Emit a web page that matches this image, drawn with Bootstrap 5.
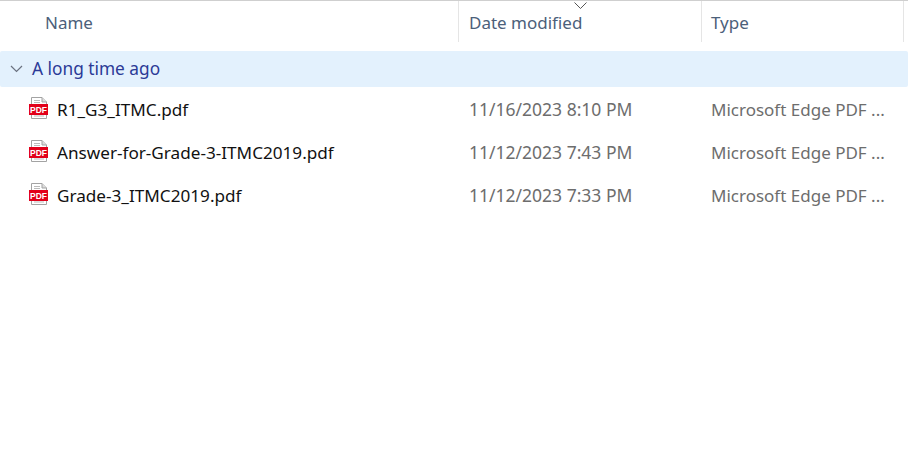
<!DOCTYPE html>
<html lang="en">
<head>
<meta charset="UTF-8">
<title>Downloads</title>
<link href="https://cdn.jsdelivr.net/npm/bootstrap@5.3.0/dist/css/bootstrap.min.css" rel="stylesheet">
<style>
body { background: #fff; font-family: "Noto Sans", "Open Sans", sans-serif; font-size: 17px; overflow: hidden; }
.top-line { height: 1px; background: #cfcfcf; }
.head-row { height: 41px; color: #4c607a; }
.col-name { width: 458px; padding-left: 45px; }
.col-date { width: 243px; padding-left: 10px; }
.col-type { width: 203px; padding-left: 9px; }
.head-row > div { height: 41px; line-height: 43px; position: relative; }
.head-row .col-date, .head-row .col-type { border-left: 1px solid #e5e5e5; }
.head-row .col-type { border-right: 1px solid #e5e5e5; }
.sort-mark { position: absolute; left: 115px; top: 1px; width: 13px; height: 7px; }
.group-row { margin-top: 9px; height: 36px; background: #e3f1fd; border-radius: 2px; color: #2b3a97; padding-left: 10px; gap: 9px; font-size: 17.3px; }
.file-list { margin-top: 1px; }
.file-row { height: 43px; }
.file-row .col-name { padding-left: 28px; color: #111; gap: 8px; font-size: 17.15px; }
.file-row .col-name svg { margin-top: -3px; }
.file-row .col-date { color: #6d6d6d; padding-left: 11px; font-size: 17.5px; }
.file-row .col-type { color: #6d6d6d; padding-left: 10px; white-space: nowrap; }
</style>
</head>
<body>

<div class="top-line"></div>

<div class="head-row d-flex">
    <div class="col-name">Name</div>
    <div class="col-date">Date modified
        <svg class="sort-mark" viewBox="0 0 13 7"><path d="M.5.5 6.500 6.500 12.500.5" fill="none" stroke="#555" stroke-width="1"/></svg>
    </div>
    <div class="col-type">Type</div>
</div>

<div class="group-row d-flex align-items-center">
    <svg width="13" height="8" viewBox="0 0 13 8"><path d="M1 1 6.500 6.500 12 1" fill="none" stroke="#6b7280" stroke-width="1.200"/></svg>
    <span>A long time ago</span>
</div>

<div class="file-list">
    <div class="file-row d-flex align-items-center">
        <div class="col-name d-flex align-items-center">
            <svg width="21" height="22" viewBox="0 0 21 22"><path d="M3.500.5H14L18.500 5V21.500H3.500Z" fill="#fff" stroke="#a3a3a3"/><path d="M14 .5V5H18.500" fill="#ddd" stroke="#a3a3a3"/><path d="M6 3.500H12M6 5.500H12M6 19H16" stroke="#bbb"/><rect x="1" y="7" width="19" height="11" fill="#e2001a"/><text x="10.500" y="15.500" font-size="8.500" font-weight="700" fill="#fff" text-anchor="middle" font-family="Liberation Sans, sans-serif">PDF</text></svg>
            <span>R1_G3_ITMC.pdf</span>
        </div>
        <div class="col-date">11/16/2023 8:10 PM</div>
        <div class="col-type">Microsoft Edge PDF ...</div>
    </div>
    <div class="file-row d-flex align-items-center">
        <div class="col-name d-flex align-items-center">
            <svg width="21" height="22" viewBox="0 0 21 22"><path d="M3.500.5H14L18.500 5V21.500H3.500Z" fill="#fff" stroke="#a3a3a3"/><path d="M14 .5V5H18.500" fill="#ddd" stroke="#a3a3a3"/><path d="M6 3.500H12M6 5.500H12M6 19H16" stroke="#bbb"/><rect x="1" y="7" width="19" height="11" fill="#e2001a"/><text x="10.500" y="15.500" font-size="8.500" font-weight="700" fill="#fff" text-anchor="middle" font-family="Liberation Sans, sans-serif">PDF</text></svg>
            <span>Answer-for-Grade-3-ITMC2019.pdf</span>
        </div>
        <div class="col-date">11/12/2023 7:43 PM</div>
        <div class="col-type">Microsoft Edge PDF ...</div>
    </div>
    <div class="file-row d-flex align-items-center">
        <div class="col-name d-flex align-items-center">
            <svg width="21" height="22" viewBox="0 0 21 22"><path d="M3.500.5H14L18.500 5V21.500H3.500Z" fill="#fff" stroke="#a3a3a3"/><path d="M14 .5V5H18.500" fill="#ddd" stroke="#a3a3a3"/><path d="M6 3.500H12M6 5.500H12M6 19H16" stroke="#bbb"/><rect x="1" y="7" width="19" height="11" fill="#e2001a"/><text x="10.500" y="15.500" font-size="8.500" font-weight="700" fill="#fff" text-anchor="middle" font-family="Liberation Sans, sans-serif">PDF</text></svg>
            <span>Grade-3_ITMC2019.pdf</span>
        </div>
        <div class="col-date">11/12/2023 7:33 PM</div>
        <div class="col-type">Microsoft Edge PDF ...</div>
    </div>
</div>

<script src="https://cdn.jsdelivr.net/npm/bootstrap@5.3.0/dist/js/bootstrap.bundle.min.js"></script>
</body>
</html>
